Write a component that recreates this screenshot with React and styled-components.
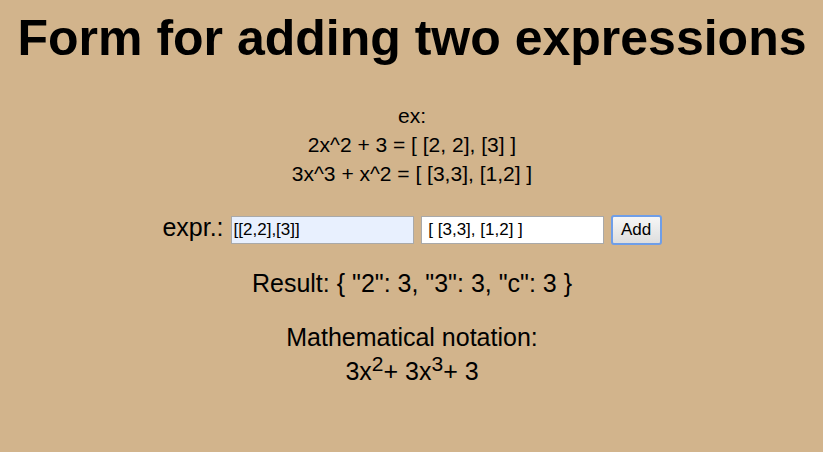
import React, { useState } from "react";
import styled, { createGlobalStyle } from "styled-components";

const GlobalStyle = createGlobalStyle`
  body {
    margin: 0;
    background: #d2b48c;
    color: #000;
    font-family: "Liberation Sans", Arial, sans-serif;
  }
`;

const Page = styled.main`
  display: flex;
  flex-direction: column;
  align-items: center;
  text-align: center;
  padding: 9px 8px 8px 9px;
`;

const Title = styled.h1`
  margin: 0;
  font-size: 50px;
  line-height: 58px;
`;

const Example = styled.p`
  margin: 34px 0 0;
  font-size: 21px;
  line-height: 29px;
`;

const Form = styled.form`
  display: flex;
  flex-wrap: wrap;
  align-items: center;
  gap: 7px;
  margin-top: 25px;
`;

const Label = styled.label`
  font-size: 25px;
  line-height: 29px;
  padding-bottom: 5px;
`;

const Field = styled.input`
  box-sizing: border-box;
  width: 183px;
  height: 28px;
  margin: 0;
  padding: 1px 2px;
  border: 1px solid #a9a9a9;
  border-radius: 0;
  background: ${(p) => (p.$filled ? "#e8f0fe" : "#fff")};
  color: #000;
  font: 17px "Liberation Sans", Arial, sans-serif;
`;

const Button = styled.button`
  box-sizing: border-box;
  width: 51px;
  height: 30px;
  padding: 0;
  border: 2px solid #6f9ee8;
  border-radius: 3px;
  background: linear-gradient(#f6f6f6, #dedede);
  color: #000;
  font: 17px "Liberation Sans", Arial, sans-serif;
`;

const Output = styled.p`
  margin: ${(p) => (p.$first ? 22 : 25)}px 0 0;
  font-size: 25px;
  line-height: 29px;
`;

const Formula = styled.span`
  display: block;
  margin-top: 5px;
`;

const Power = styled.sup`
  font-size: 21px;
  line-height: 0;
`;

export default function App() {
  const [first, setFirst] = useState("[[2,2],[3]]");
  const [second, setSecond] = useState(" [ [3,3], [1,2] ]");
  return (
    <>
      <GlobalStyle />
      <Page>
        <Title>Form for adding two expressions</Title>
        <Example>
          ex:<br />
          2x^2 + 3 = [ [2, 2], [3] ]<br />
          3x^3 + x^2 = [ [3,3], [1,2] ]
        </Example>
        <Form onSubmit={(e) => e.preventDefault()}>
          <Label htmlFor="first">expr.:</Label>
          <Field id="first" $filled value={first} onChange={(e) => setFirst(e.target.value)} />
          <Field aria-label="Second expression" value={second} onChange={(e) => setSecond(e.target.value)} />
          <Button type="submit">Add</Button>
        </Form>
        <Output $first>{'Result: { "2": 3, "3": 3, "c": 3 }'}</Output>
        <Output>
          Mathematical notation:
          <Formula>
            3x<Power>2</Power>+ 3x<Power>3</Power>+ 3
          </Formula>
        </Output>
      </Page>
    </>
  );
}
